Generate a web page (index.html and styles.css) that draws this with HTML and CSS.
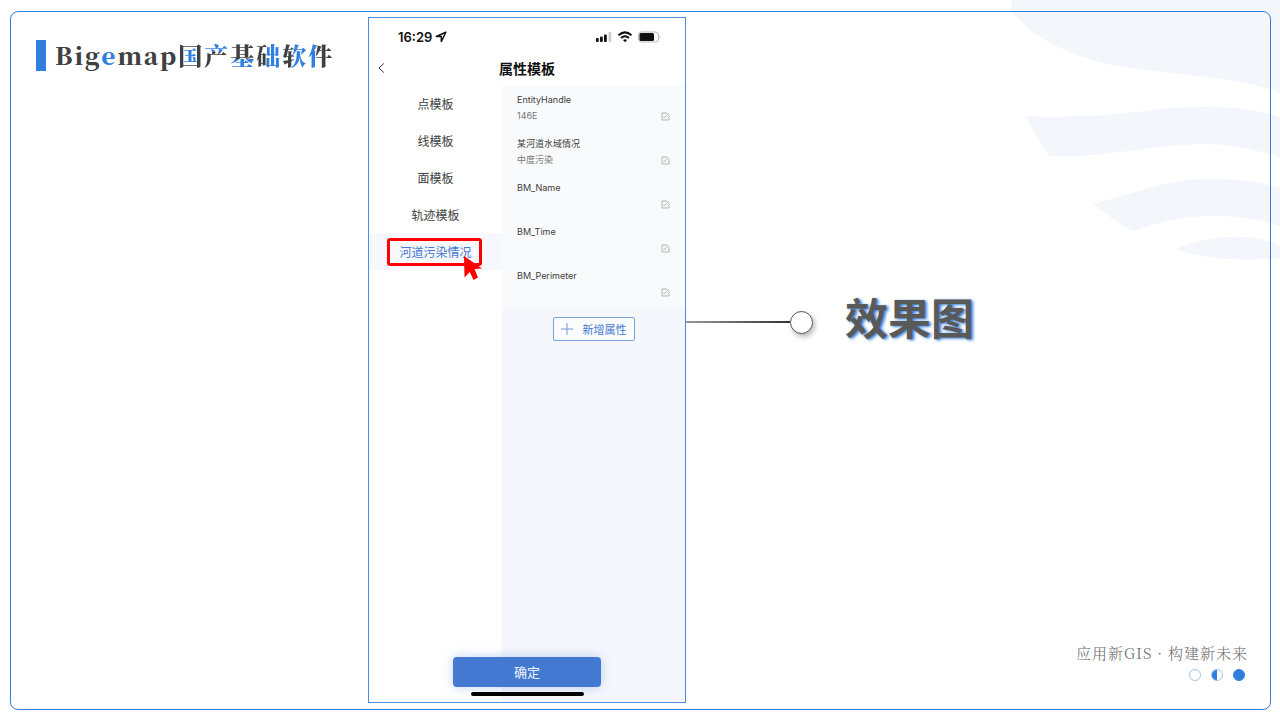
FILE: index.html
```html
<!DOCTYPE html>
<html lang="zh-CN">
<head>
<meta charset="utf-8">
<meta name="viewport" content="width=device-width, initial-scale=1">
<title>Bigemap国产基础软件</title>
<link rel="stylesheet" href="styles.css">
</head>
<body>
<svg class="waves" viewBox="0 0 280 270" aria-hidden="true">
  <path d="M12 0C11 4 11 8 12 12C35 41 80 61 130 68C185 76 240 77 280 93V0Z"/>
  <path d="M26 116C90 118 120 114 160 109C210 105 245 106 280 117V158C240 143 205 142 160 147C120 152 90 157 49 156.500Q36 137 26 116Z"/>
  <path d="M93 204C130 195 155 183 195 179.500C225 178 255 180 280 188V226C230 210 175 214 133 231.500Q111 219 93 204Z"/>
  <path d="M175 249C215 234 250 233 280 245V258C240 262 205 259 175 249Z"/>
</svg>
<main class="slide">
  <header class="brand">
    <span class="brand-bar"></span>
    <h1 class="brand-name">Big<span class="accent">e</span>map<span class="cut cut-inner">国</span><span class="cut cut-top">产</span><span class="cut cut-bottom">基</span><span class="cut cut-right">础</span><span class="cut cut-right">软</span><span class="cut cut-left">件</span></h1>
  </header>

  <section class="phone" aria-label="属性模板">
    <div class="status">
      <span class="time">16:29</span>
      <svg class="locate" viewBox="0 0 12 12"><path d="M10.800 1.200L1.300 5.500H6.300V10.600Z"/></svg>
      <svg class="signals" viewBox="0 0 66 14">
        <g><rect x="0" y="8" width="2.800" height="4" rx="1"/><rect x="4" y="6.500" width="2.800" height="5.500" rx="1"/><rect x="8" y="4.500" width="2.800" height="7.500" rx="1"/></g>
        <rect class="faint" x="12.500" y="2" width="2.800" height="10" rx="1"/>
        <g class="wifi"><path d="M22.500 5.300Q29 -.6 35.500 5.300"/><path d="M25 8Q29 4.400 33 8"/></g>
        <path d="M27 10Q29 8.500 31 10L29 12.200Z"/>
        <rect class="shell" x="42.500" y="2" width="20" height="10" rx="3"/>
        <rect x="43.500" y="3" width="14.500" height="8" rx="1.500"/>
        <path class="faint" d="M63.300 5.300Q66 7 63.300 8.700Z"/>
      </svg>
    </div>
    <div class="titlebar">
      <button class="back" type="button" aria-label="返回"><svg viewBox="0 0 8 12"><path d="M6.800 1.500L2 6L6.800 10.500"/></svg></button>
      <h2 class="title">属性模板</h2>
    </div>
    <div class="panes">
      <nav class="menu">
        <button class="menu-item" type="button">点模板</button>
        <button class="menu-item" type="button">线模板</button>
        <button class="menu-item" type="button">面模板</button>
        <button class="menu-item" type="button">轨迹模板</button>
        <button class="menu-item current" type="button">河道污染情况
          <span class="mark"></span>
          <svg class="pointer" viewBox="0 0 20 26"><path d="M1 0L19 12.500L11.500 13L15 21.500L10.500 24L6.800 16L1.500 21.500Z"/></svg>
        </button>
      </nav>
      <div class="detail">
        <ul class="fields">
          <li class="field"><span class="name">EntityHandle</span><span class="value">146E</span><button class="edit" type="button" aria-label="编辑"><svg viewBox="0 0 9 9"><path d="M6 1H1V8H8V3M3 6L4 5L8 1M3 6V4.800"/></svg></button></li>
          <li class="field"><span class="name">某河道水域情况</span><span class="value">中度污染</span><button class="edit" type="button" aria-label="编辑"><svg viewBox="0 0 9 9"><path d="M6 1H1V8H8V3M3 6L4 5L8 1M3 6V4.800"/></svg></button></li>
          <li class="field"><span class="name">BM_Name</span><span class="value"></span><button class="edit" type="button" aria-label="编辑"><svg viewBox="0 0 9 9"><path d="M6 1H1V8H8V3M3 6L4 5L8 1M3 6V4.800"/></svg></button></li>
          <li class="field"><span class="name">BM_Time</span><span class="value"></span><button class="edit" type="button" aria-label="编辑"><svg viewBox="0 0 9 9"><path d="M6 1H1V8H8V3M3 6L4 5L8 1M3 6V4.800"/></svg></button></li>
          <li class="field"><span class="name">BM_Perimeter</span><span class="value"></span><button class="edit" type="button" aria-label="编辑"><svg viewBox="0 0 9 9"><path d="M6 1H1V8H8V3M3 6L4 5L8 1M3 6V4.800"/></svg></button></li>
        </ul>
        <button class="add" type="button"><svg viewBox="0 0 12 12"><path d="M6 0V12M0 6H12"/></svg>新增属性</button>
      </div>
    </div>
    <div class="actions">
      <button class="confirm" type="button">确定</button>
      <span class="home"></span>
    </div>
  </section>

  <section class="side">
    <div class="callout">
      <span class="line"></span><span class="knob"></span>
      <h2 class="caption">效果图</h2>
    </div>
    <footer class="foot">
      <p class="slogan">应用新GIS · 构建新未来</p>
      <div class="dots"><span class="dot"></span><span class="dot half"></span><span class="dot full"></span></div>
    </footer>
  </section>
</main>
</body>
</html>
```

FILE: styles.css
```css
* { box-sizing: border-box; }

body {
  margin: 0;
  background: #fff;
  color: #404040;
  font-family: "Noto Sans CJK SC", sans-serif;
}

button {
  margin: 0;
  padding: 0;
  border: 0;
  background: none;
  color: inherit;
  font: inherit;
}

h1, h2, p, ul { margin: 0; padding: 0; font-weight: inherit; }

svg { display: block; }

.waves {
  position: absolute;
  top: 0;
  right: 0;
  width: 280px;
  height: 270px;
  fill: #f3f7fc;
}

.slide {
  position: relative;
  display: grid;
  grid-template-columns: 357fr 318fr 584fr;
  min-height: calc(100vh - 21px);
  margin: 11px 9px 10px 10px;
  padding: 5px 0 6px;
  border: 1px solid #307edd;
  border-radius: 8px;
}

.brand {
  display: flex;
  align-items: center;
  align-self: start;
  gap: 9px;
  margin-top: 22px;
  padding-left: 25px;
}

.brand-bar { width: 10px; height: 31px; margin-top: 1px; background: #307edd; }

.brand-name {
  font: 900 24px/32px "Noto Serif CJK SC", "Source Han Serif SC", "Liberation Serif", "Noto Sans CJK SC", serif;
  letter-spacing: 2px;
  white-space: nowrap;
}

.accent { color: #307edd; }

.cut {
  background-clip: text;
  -webkit-background-clip: text;
  color: transparent;
}

.cut-inner { background-color: #404040; background-image: linear-gradient(#307edd, #307edd); background-size: 14px 16px; background-position: 5px 55%; background-repeat: no-repeat; }
.cut-top { background-image: linear-gradient(#307edd 42%, #404040 42%); }
.cut-bottom { background-image: linear-gradient(#404040 62%, #307edd 62%); }
.cut-right { background-image: linear-gradient(90deg, #404040 38%, #307edd 38%); }
.cut-left { background-image: linear-gradient(90deg, #307edd 32%, #404040 32%); }

.phone {
  position: relative;
  display: flex;
  flex-direction: column;
  border: 1px solid #4a8ee2;
  background: #fff;
}

.status {
  display: flex;
  align-items: center;
  height: 38px;
  padding: 0 23px 0 29px;
}

.time { color: #111; font: 600 13px/16px Inter, sans-serif; }

.locate {
  width: 12px;
  height: 12px;
  margin-left: 3px;
  fill: none;
  stroke: #111;
  stroke-width: 1.5;
  stroke-linejoin: round;
}

.signals { width: 66px; height: 14px; margin-left: auto; fill: #111; }
.signals .wifi { fill: none; stroke: #111; stroke-width: 2; }
.signals .faint { fill: #ccc; }
.signals .shell { fill: none; stroke: #bbb; }

.titlebar {
  display: grid;
  grid-template-columns: 1fr auto 1fr;
  align-items: center;
  height: 29px;
  padding: 0 8px 5px;
}

.back svg { width: 8px; height: 12px; fill: none; stroke: #333; stroke-width: 1; }
.title { color: #111; font-size: 14px; font-weight: 700; line-height: 20px; }
.back { justify-self: start; }

.panes {
  display: grid;
  grid-template-columns: 133fr 183fr;
  flex: 1;
}

.menu { display: flex; flex-direction: column; }

.menu-item {
  position: relative;
  height: 37px;
  font-size: 12px;
  line-height: 18px;
}

.current { background: #f6f8fd; color: #4479cf; }

.mark {
  position: absolute;
  top: 5px;
  left: 18px;
  width: 95px;
  height: 28px;
  border: 3px solid #f00;
  border-radius: 3px;
}

.pointer { position: absolute; top: 23px; left: 94px; width: 20px; height: 26px; fill: #f00; }

.detail { background: #f5f7fc; padding-bottom: 60px; }

.fields {
  display: grid;
  padding: 1px 0;
  background: #f9fafc;
  list-style: none;
}

.field {
  display: grid;
  grid-template-columns: 1fr auto;
  grid-template-rows: 16px 16px;
  align-items: center;
  padding: 6px 15px;
  font-family: Inter, "Noto Sans CJK SC", sans-serif;
  font-size: 9px;
  line-height: 16px;
}

.name { grid-column: 1 / 3; }
.value { color: #777; }
.edit svg { width: 9px; height: 9px; fill: none; stroke: #b5b5b5; stroke-width: 1; }

.add {
  display: flex;
  align-items: center;
  justify-content: center;
  gap: 10px;
  width: 82px;
  height: 24px;
  margin: 10px auto 0;
  border: 1px solid #78a4dc;
  border-radius: 2px;
  background: #fbfcfe;
  color: #4479cf;
  font-size: 11px;
  line-height: 16px;
}

.add svg { width: 12px; height: 12px; stroke: #6f9bd8; stroke-width: 1; }

.actions {
  position: absolute;
  right: 0;
  bottom: 6px;
  left: 0;
  display: flex;
  flex-direction: column;
  align-items: center;
  gap: 5px;
}

.confirm {
  width: 148px;
  height: 30px;
  border-radius: 4px;
  background: #4479d1;
  box-shadow: 0 0 12px #4479d155;
  color: #f0f5ff;
  font-size: 13px;
  line-height: 20px;
}

.home { width: 113px; height: 4px; border-radius: 2px; background: #000; }

.side {
  display: grid;
  grid-template-rows: 267fr auto 280fr auto;
}

.callout { grid-row: 2; display: flex; align-items: center; }
.line { width: 104px; height: 2px; background: linear-gradient(90deg, #999, #333); }

.knob {
  width: 23px;
  height: 23px;
  border: 1px solid #555;
  border-radius: 50%;
  background: #fff;
  box-shadow: 2px 3px 5px #0004;
}

.caption {
  margin-left: 32px;
  padding-bottom: 12px;
  color: #595959;
  font-size: 43px;
  font-weight: 700;
  line-height: 64px;
  text-shadow: 2px 1px 3px #307edd;
  white-space: nowrap;
}

.foot {
  grid-row: 4;
  display: flex;
  flex-direction: column;
  align-items: flex-end;
  gap: 4px;
  padding: 0 22px 22px 0;
}

.slogan {
  color: #6c6c6c;
  font: 300 15px/24px "Noto Serif CJK SC", "Source Han Serif SC", "Liberation Serif", "Noto Sans CJK SC", serif;
  letter-spacing: 1px;
}

.dots { display: flex; gap: 10px; padding-right: 3px; }
.dot { width: 12px; height: 12px; border: 1px solid #9fc4f0; border-radius: 50%; }
.half { background: linear-gradient(90deg, #307edd 50%, #fff 50%); }
.full { border-color: #307edd; background: #307edd; }
```
